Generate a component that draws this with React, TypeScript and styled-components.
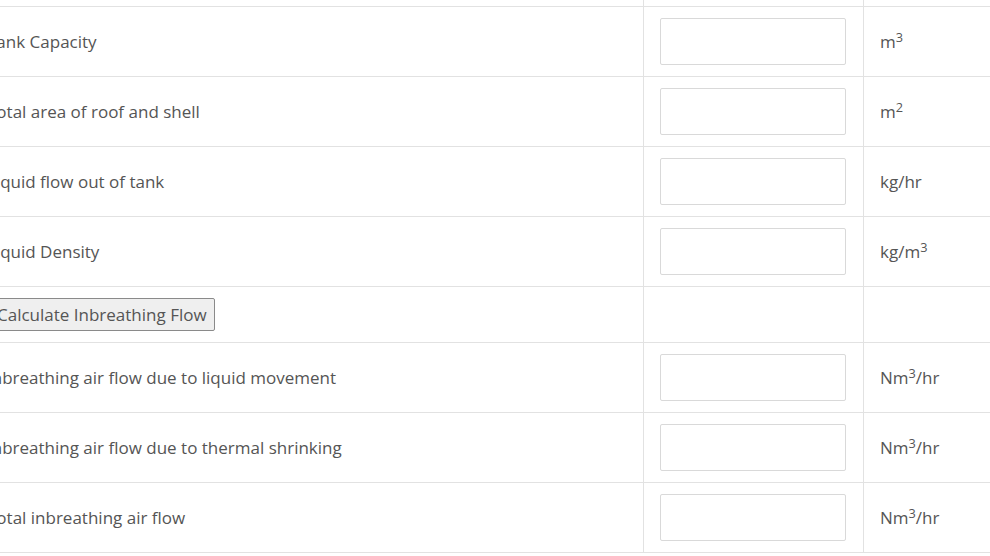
import React from "react";
import styled, { createGlobalStyle } from "styled-components";

const GlobalStyle = createGlobalStyle`
  html, body { margin: 0; padding: 0; background: #ffffff; overflow: hidden; }
  body { font-family: "Open Sans", "Liberation Sans", sans-serif; }
`;

const Viewport = styled.div`
  width: 990px;
  height: 556px;
  overflow: hidden;
`;

const Scroller = styled.div`
  margin: -64px 0 0 -30px;
`;

const Table = styled.table`
  border-collapse: collapse;
  width: 1180px;
  table-layout: fixed;
  font-family: "Open Sans", "Liberation Sans", sans-serif;
  font-size: 17px;
  color: #555555;
`;

const Row = styled.tr<{ $h?: number }>`
  ${(p) => (p.$h ? `height: ${p.$h}px;` : "")}
`;

const Cell = styled.td`
  border: 1px solid #e2e2e2;
  padding: 11px 16px;
  vertical-align: middle;
  line-height: 22px;
`;

const NumInput = styled.input`
  display: block;
  box-sizing: border-box;
  width: 186px;
  height: 47px;
  border: 1px solid #d9d9d9;
  border-radius: 2px;
  background: #ffffff;
  font: inherit;
  padding: 6px 10px;
  outline: none;
`;

const Sup = styled.sup`
  font-size: 75%;
  line-height: 0;
  position: relative;
  top: -0.4em;
  vertical-align: baseline;
`;

const ActionButton = styled.button`
  box-sizing: border-box;
  height: 33px;
  padding: 2px 7px 3px 9px;
  font-family: "Open Sans", "Liberation Sans", sans-serif;
  font-size: 17px;
  color: #555555;
  background: #efefef;
  border: 1px solid #8a8a8a;
  border-radius: 2px;
`;

type Unit = React.ReactNode;

const rows: { label: string; unit: Unit }[] = [
  { label: "Tank Capacity", unit: <>m<Sup>3</Sup></> },
  { label: "Total area of roof and shell", unit: <>m<Sup>2</Sup></> },
  { label: "Liquid flow out of tank", unit: <>kg/hr</> },
  { label: "Liquid Density", unit: <>kg/m<Sup>3</Sup></> },
];

const results: { label: string; unit: Unit }[] = [
  { label: "Inbreathing air flow due to liquid movement", unit: <>Nm<Sup>3</Sup>/hr</> },
  { label: "Inbreathing air flow due to thermal shrinking", unit: <>Nm<Sup>3</Sup>/hr</> },
  { label: "Total inbreathing air flow", unit: <>Nm<Sup>3</Sup>/hr</> },
];

export default function App() {
  return (
    <>
      <GlobalStyle />
      <Viewport>
        <Scroller>
          <Table>
            <colgroup>
              <col style={{ width: 673 }} />
              <col style={{ width: 220 }} />
              <col />
            </colgroup>
            <tbody>
              <Row $h={70}>
                <Cell />
                <Cell />
                <Cell />
              </Row>
              {rows.map((r) => (
                <Row key={r.label}>
                  <Cell>{r.label}</Cell>
                  <Cell><NumInput /></Cell>
                  <Cell>{r.unit}</Cell>
                </Row>
              ))}
              <Row>
                <Cell><ActionButton>Calculate Inbreathing Flow</ActionButton></Cell>
                <Cell />
                <Cell />
              </Row>
              {results.map((r) => (
                <Row key={r.label}>
                  <Cell>{r.label}</Cell>
                  <Cell><NumInput readOnly /></Cell>
                  <Cell>{r.unit}</Cell>
                </Row>
              ))}
            </tbody>
          </Table>
        </Scroller>
      </Viewport>
    </>
  );
}
